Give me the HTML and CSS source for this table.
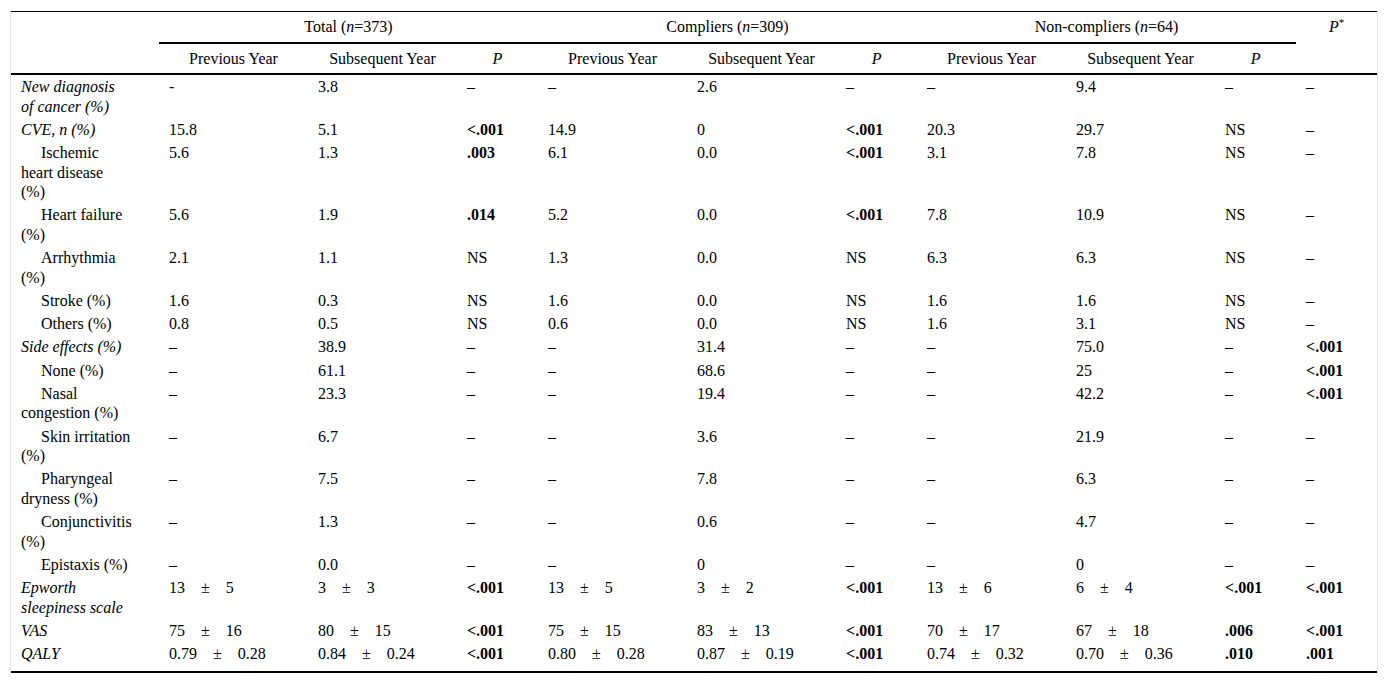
FILE: index.html
```html
<!DOCTYPE html>
<html lang="en">
<head>
<meta charset="utf-8">
<title>Table</title>
<link rel="stylesheet" href="styles.css">
</head>
<body>
<div class="wrap">
<table class="data">
<colgroup>
<col class="c-label">
<col class="c-yr"><col class="c-yr"><col class="c-p">
<col class="c-yr"><col class="c-yr"><col class="c-p">
<col class="c-yr"><col class="c-yr"><col class="c-p">
<col class="c-pstar">
</colgroup>
<thead>
<tr class="h1">
<th rowspan="2" class="blank"></th>
<th colspan="3" class="grp">Total (<i>n</i>=373)</th>
<th colspan="3" class="grp">Compliers (<i>n</i>=309)</th>
<th colspan="3" class="grp">Non-compliers (<i>n</i>=64)</th>
<th rowspan="2" class="pstar"><i>P</i><sup>*</sup></th>
</tr>
<tr class="h2">
<th>Previous Year</th><th>Subsequent Year</th><th><i>P</i></th>
<th>Previous Year</th><th>Subsequent Year</th><th><i>P</i></th>
<th>Previous Year</th><th>Subsequent Year</th><th><i>P</i></th>
</tr>
</thead>
<tbody>
<tr><td class="lbl"><i>New diagnosis<br>of cancer (%)</i></td><td>-</td><td>3.8</td><td>–</td><td>–</td><td>2.6</td><td>–</td><td>–</td><td>9.4</td><td>–</td><td>–</td></tr>
<tr><td class="lbl"><i>CVE, n (%)</i></td><td>15.8</td><td>5.1</td><td><b>&lt;.001</b></td><td>14.9</td><td>0</td><td><b>&lt;.001</b></td><td>20.3</td><td>29.7</td><td>NS</td><td>–</td></tr>
<tr><td class="lbl sub">Ischemic<br>heart disease<br>(%)</td><td>5.6</td><td>1.3</td><td><b>.003</b></td><td>6.1</td><td>0.0</td><td><b>&lt;.001</b></td><td>3.1</td><td>7.8</td><td>NS</td><td>–</td></tr>
<tr><td class="lbl sub">Heart failure<br>(%)</td><td>5.6</td><td>1.9</td><td><b>.014</b></td><td>5.2</td><td>0.0</td><td><b>&lt;.001</b></td><td>7.8</td><td>10.9</td><td>NS</td><td>–</td></tr>
<tr><td class="lbl sub">Arrhythmia<br>(%)</td><td>2.1</td><td>1.1</td><td>NS</td><td>1.3</td><td>0.0</td><td>NS</td><td>6.3</td><td>6.3</td><td>NS</td><td>–</td></tr>
<tr><td class="lbl sub">Stroke (%)</td><td>1.6</td><td>0.3</td><td>NS</td><td>1.6</td><td>0.0</td><td>NS</td><td>1.6</td><td>1.6</td><td>NS</td><td>–</td></tr>
<tr><td class="lbl sub">Others (%)</td><td>0.8</td><td>0.5</td><td>NS</td><td>0.6</td><td>0.0</td><td>NS</td><td>1.6</td><td>3.1</td><td>NS</td><td>–</td></tr>
<tr><td class="lbl"><i>Side effects (%)</i></td><td>–</td><td>38.9</td><td>–</td><td>–</td><td>31.4</td><td>–</td><td>–</td><td>75.0</td><td>–</td><td><b>&lt;.001</b></td></tr>
<tr><td class="lbl sub">None (%)</td><td>–</td><td>61.1</td><td>–</td><td>–</td><td>68.6</td><td>–</td><td>–</td><td>25</td><td>–</td><td><b>&lt;.001</b></td></tr>
<tr><td class="lbl sub">Nasal<br>congestion (%)</td><td>–</td><td>23.3</td><td>–</td><td>–</td><td>19.4</td><td>–</td><td>–</td><td>42.2</td><td>–</td><td><b>&lt;.001</b></td></tr>
<tr><td class="lbl sub">Skin irritation<br>(%)</td><td>–</td><td>6.7</td><td>–</td><td>–</td><td>3.6</td><td>–</td><td>–</td><td>21.9</td><td>–</td><td>–</td></tr>
<tr><td class="lbl sub">Pharyngeal<br>dryness (%)</td><td>–</td><td>7.5</td><td>–</td><td>–</td><td>7.8</td><td>–</td><td>–</td><td>6.3</td><td>–</td><td>–</td></tr>
<tr><td class="lbl sub">Conjunctivitis<br>(%)</td><td>–</td><td>1.3</td><td>–</td><td>–</td><td>0.6</td><td>–</td><td>–</td><td>4.7</td><td>–</td><td>–</td></tr>
<tr><td class="lbl sub">Epistaxis (%)</td><td>–</td><td>0.0</td><td>–</td><td>–</td><td>0</td><td>–</td><td>–</td><td>0</td><td>–</td><td>–</td></tr>
<tr><td class="lbl"><i>Epworth<br>sleepiness scale</i></td><td>13<span class="pm">±</span>5</td><td>3<span class="pm">±</span>3</td><td><b>&lt;.001</b></td><td>13<span class="pm">±</span>5</td><td>3<span class="pm">±</span>2</td><td><b>&lt;.001</b></td><td>13<span class="pm">±</span>6</td><td>6<span class="pm">±</span>4</td><td><b>&lt;.001</b></td><td><b>&lt;.001</b></td></tr>
<tr><td class="lbl"><i>VAS</i></td><td>75<span class="pm">±</span>16</td><td>80<span class="pm">±</span>15</td><td><b>&lt;.001</b></td><td>75<span class="pm">±</span>15</td><td>83<span class="pm">±</span>13</td><td><b>&lt;.001</b></td><td>70<span class="pm">±</span>17</td><td>67<span class="pm">±</span>18</td><td><b>.006</b></td><td><b>&lt;.001</b></td></tr>
<tr class="last"><td class="lbl"><i>QALY</i></td><td>0.79<span class="pm">±</span>0.28</td><td>0.84<span class="pm">±</span>0.24</td><td><b>&lt;.001</b></td><td>0.80<span class="pm">±</span>0.28</td><td>0.87<span class="pm">±</span>0.19</td><td><b>&lt;.001</b></td><td>0.74<span class="pm">±</span>0.32</td><td>0.70<span class="pm">±</span>0.36</td><td><b>.010</b></td><td><b>.001</b></td></tr>
</tbody>
</table>
</div>
</body>
</html>
```
FILE: styles.css
```css
html, body {
  margin: 0;
  padding: 0;
  background: #ffffff;
}

body {
  font-family: "Liberation Serif", "Times New Roman", serif;
  font-size: 16px;
  color: #000000;
}

.wrap {
  margin: 11px 10px 0;
  border-left: 1px solid #e4e4e4;
  border-right: 1px solid #e4e4e4;
}

.data {
  width: 100%;
  table-layout: fixed;
  border-collapse: collapse;
  border-top: 1px solid #000;
  border-bottom: 2px solid #000;
  line-height: 19.5px;
}

.c-label { width: 148px; }
.c-yr { width: 149px; }
.c-p { width: 81px; }
.c-pstar { width: 81px; }

.data th {
  font-weight: normal;
  padding: 5px 10px;
  text-align: center;
  vertical-align: middle;
}

.data .h1 .grp {
  border-bottom: 2px solid #000;
}

.data .h2 th,
.data .blank,
.data .pstar {
  border-bottom: 2px solid #000;
}

.data .pstar {
  vertical-align: top;
}

.data sup {
  font-size: 11px;
  line-height: 0;
  vertical-align: 6px;
}

.data td {
  padding: 2px 10px 1.75px;
  text-align: left;
  vertical-align: top;
}

.data td.lbl {
  padding-right: 4px;
  white-space: nowrap;
}

.data td.sub {
  text-indent: 20px;
}

.data tr.last td {
  padding-bottom: 7px;
}

.pm {
  margin: 0 16px;
}
```
